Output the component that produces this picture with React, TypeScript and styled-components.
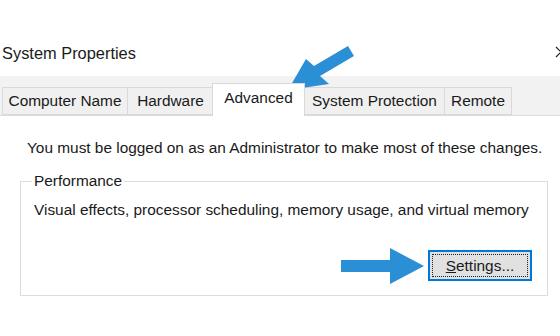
import styled, { createGlobalStyle } from 'styled-components';

const tabs = [
    { label: 'Computer Name', width: 126 },
    { label: 'Hardware', width: 87 },
    { label: 'Advanced', width: 93 },
    { label: 'System Protection', width: 141 },
    { label: 'Remote', width: 68 },
];
const activeTab = 'Advanced';

const App: React.FC = () => {
    return (
        <>
            <GlobalStyle />
            <Window>
                <TitleBar>
                    <Title>System Properties</Title>
                    <CloseIcon viewBox="0 0 12 12">
                        <path d="M1 1 L11 11 M11 1 L1 11" />
                    </CloseIcon>
                </TitleBar>
                <TabStrip>
                    {tabs.map((tab) => (
                        <Tab key={tab.label} $active={tab.label === activeTab} $width={tab.width}>
                            {tab.label}
                        </Tab>
                    ))}
                </TabStrip>
                <Panel>
                    <Notice>
                        You must be logged on as an Administrator to make most of these changes.
                    </Notice>
                    <Group>
                        <Legend>Performance</Legend>
                        <GroupBody>
                            <GroupText>
                                Visual effects, processor scheduling, memory usage, and virtual memory
                            </GroupText>
                            <ButtonRow>
                                <SettingsButton>
                                    <FocusRing>
                                        <u>S</u>ettings...
                                    </FocusRing>
                                </SettingsButton>
                            </ButtonRow>
                        </GroupBody>
                    </Group>
                </Panel>
                <Annotations viewBox="0 0 560 336">
                    <polygon points="288,90 306,59 314,66 348,46 354,56 320,76 329,84" />
                    <polygon points="341,260 390,260 390,248 424,266 390,284 390,272 341,272" />
                </Annotations>
            </Window>
        </>
    );
};
export default App;

const GlobalStyle = createGlobalStyle`
    html, body {
        margin: 0;
        padding: 0;
        background: #ffffff;
        overflow: hidden;
    }
    body {
        font-family: 'Liberation Sans', Arial, sans-serif;
        color: #1a1a1a;
    }
`;

const Window = styled.div`
    position: relative;
    width: 560px;
    height: 336px;
    display: flex;
    flex-direction: column;
    background: #ffffff;
    overflow: hidden;
`;

const TitleBar = styled.div`
    display: flex;
    align-items: center;
    justify-content: space-between;
    height: 24px;
    margin-top: 41px;
    padding-left: 2px;
`;

const Title = styled.div`
    font-size: 16.4px;
    color: #1a1a1a;
`;

const CloseIcon = styled.svg`
    width: 12px;
    height: 12px;
    margin-right: -7px;
    margin-top: -2px;
    fill: none;
    stroke: #222222;
    stroke-width: 1.2;
`;

const TabStrip = styled.div`
    display: flex;
    align-items: flex-end;
    height: 40px;
    margin-top: 11px;
    padding-left: 2px;
    background: #f2f2f2;
    border-bottom: 1px solid #dcdcdc;
    box-sizing: border-box;
`;

const Tab = styled.div<{ $active: boolean; $width: number }>`
    position: relative;
    display: flex;
    align-items: center;
    justify-content: center;
    box-sizing: border-box;
    width: ${({ $width }) => $width}px;
    height: ${({ $active }) => ($active ? '33px' : '28px')};
    margin: ${({ $active }) => ($active ? '0 0 -1px -2px' : '0 0 0 -1px')};
    padding-bottom: ${({ $active }) => ($active ? '5px' : '0')};
    background: ${({ $active }) => ($active ? '#ffffff' : '#f0f0f0')};
    border: 1px solid #d9d9d9;
    border-bottom: ${({ $active }) => ($active ? 'none' : '1px solid #d9d9d9')};
    z-index: ${({ $active }) => ($active ? 1 : 0)};
    font-size: 15.4px;
    color: #1a1a1a;
    white-space: nowrap;
    &:first-child {
        margin-left: 0;
    }
`;

const Panel = styled.div`
    display: flex;
    flex-direction: column;
    padding: 23px 12px 0 20px;
`;

const Notice = styled.div`
    font-size: 15.4px;
    line-height: 18px;
    padding-left: 7px;
    color: #1a1a1a;
    white-space: nowrap;
`;

const Group = styled.fieldset`
    margin: 15px 0 0 0;
    padding: 0 15px 0 13px;
    width: 528px;
    box-sizing: border-box;
    border: 1px solid #dcdcdc;
`;

const Legend = styled.legend`
    padding: 0 2px;
    margin-left: -2px;
    font-size: 15.4px;
    line-height: 18px;
    color: #1a1a1a;
`;

const GroupBody = styled.div`
    display: flex;
    flex-direction: column;
    justify-content: space-between;
    height: 105px;
    padding: 11px 0 14px;
    box-sizing: border-box;
`;

const GroupText = styled.div`
    font-size: 15.4px;
    line-height: 18px;
    color: #1a1a1a;
    white-space: nowrap;
`;

const ButtonRow = styled.div`
    display: flex;
    justify-content: flex-end;
`;

const SettingsButton = styled.button.attrs({
    type: 'button',
})`
    width: 104px;
    height: 31px;
    padding: 2px;
    box-sizing: border-box;
    background: #e1e1e1;
    border: 2px solid #0078d7;
    cursor: pointer;
`;

const FocusRing = styled.span`
    display: flex;
    align-items: center;
    justify-content: center;
    width: 100%;
    height: 100%;
    box-sizing: border-box;
    border: 1px dotted #222222;
    font-family: 'Liberation Sans', Arial, sans-serif;
    font-size: 15.4px;
    color: #1a1a1a;
`;

const Annotations = styled.svg`
    position: absolute;
    left: 0;
    top: 0;
    width: 560px;
    height: 336px;
    pointer-events: none;
    fill: #2b8fd6;
`;
